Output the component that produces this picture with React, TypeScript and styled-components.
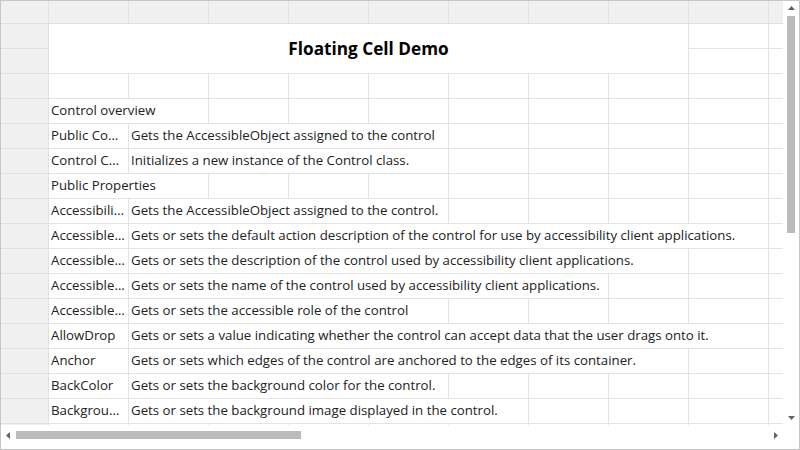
import styled, { createGlobalStyle } from 'styled-components';

const GlobalStyle = createGlobalStyle`
    html, body {
        margin: 0;
        padding: 0;
        background: #ffffff;
    }
    body {
        font-family: "Open Sans", "Liberation Sans", sans-serif;
    }
`

const COLS = 10;

type Row = {
    name?: string;
    text?: string;
    nameSpan?: number;
    textSpan?: number;
};

const rows: Row[] = [
    {},
    { name: 'Control overview', nameSpan: 2 },
    { name: 'Public Constructors', text: 'Gets the AccessibleObject assigned to the control', textSpan: 4 },
    { name: 'Control Constructor', text: 'Initializes a new instance of the Control class.', textSpan: 4 },
    { name: 'Public Properties', nameSpan: 2 },
    { name: 'AccessibilityObject', text: 'Gets the AccessibleObject assigned to the control.', textSpan: 4 },
    { name: 'AccessibleDefaultActionDescription', text: 'Gets or sets the default action description of the control for use by accessibility client applications.', textSpan: 8 },
    { name: 'AccessibleDescription', text: 'Gets or sets the description of the control used by accessibility client applications.', textSpan: 7 },
    { name: 'AccessibleName', text: 'Gets or sets the name of the control used by accessibility client applications.', textSpan: 6 },
    { name: 'AccessibleRole', text: 'Gets or sets the accessible role of the control', textSpan: 4 },
    { name: 'AllowDrop', text: 'Gets or sets a value indicating whether the control can accept data that the user drags onto it.', textSpan: 8 },
    { name: 'Anchor', text: 'Gets or sets which edges of the control are anchored to the edges of its container.', textSpan: 7 },
    { name: 'BackColor', text: 'Gets or sets the background color for the control.', textSpan: 4 },
    { name: 'BackgroundImage', text: 'Gets or sets the background image displayed in the control.', textSpan: 5 },
    {},
];

export default function App() {
    return (
        <>
            <GlobalStyle />
            <Frame>
                <Viewport>
                    <Sheet>
                        <Corner />
                        {Array.from({ length: COLS }).map((_, i) => <ColHeader key={'h' + i} />)}

                        {/* rows 1 and 2 hold the floating cell over A..H */}
                        <RowHeader />
                        <FloatingCell>Floating Cell Demo</FloatingCell>
                        <Cell />
                        <Cell />
                        <RowHeader />
                        <Cell />
                        <Cell />

                        {rows.map((r, i) => {
                            const nameSpan = r.nameSpan ?? 1;
                            const textSpan = r.text ? (r.textSpan ?? 1) : 0;
                            const used = (r.name ? nameSpan : 0) + textSpan;
                            const rest = COLS - used;
                            return [
                                <RowHeader key={'r' + i} />,
                                r.name ? <Cell key={'a' + i} $span={nameSpan} $clip={!!r.text}>{r.name}</Cell> : null,
                                r.text ? <Cell key={'b' + i} $span={textSpan}>{r.text}</Cell> : null,
                                ...Array.from({ length: rest }).map((_, j) => <Cell key={'e' + i + '-' + j} />),
                            ];
                        })}
                    </Sheet>
                </Viewport>

                <VScroll>
                    <Arrow>
                        <svg width="7" height="4" viewBox="0 0 7 4"><polygon points="0,4 7,4 3.5,0" fill="#606060" /></svg>
                    </Arrow>
                    <VTrack>
                        <VThumb />
                    </VTrack>
                    <Arrow>
                        <svg width="7" height="4" viewBox="0 0 7 4"><polygon points="0,0 7,0 3.5,4" fill="#606060" /></svg>
                    </Arrow>
                </VScroll>

                <HScroll>
                    <HArrow>
                        <svg width="4" height="7" viewBox="0 0 4 7"><polygon points="4,0 4,7 0,3.5" fill="#606060" /></svg>
                    </HArrow>
                    <HTrack>
                        <HThumb />
                    </HTrack>
                    <HArrow>
                        <svg width="4" height="7" viewBox="0 0 4 7"><polygon points="0,0 0,7 4,3.5" fill="#606060" /></svg>
                    </HArrow>
                </HScroll>
                <ScrollCorner />
            </Frame>
        </>
    )
}

const Frame = styled.div`
    width: 800px;
    height: 450px;
    box-sizing: border-box;
    border: 1px solid #c6c6c6;
    display: grid;
    grid-template-columns: 782px 16px;
    grid-template-rows: 424px 24px;
    background: #ffffff;
    overflow: hidden;
`

const Viewport = styled.div`
    overflow: hidden;
`

const Sheet = styled.div`
    display: grid;
    grid-template-columns: 48px repeat(${COLS}, 80px);
    grid-template-rows: 23px;
    grid-auto-rows: 25px;
    width: max-content;
`

const Corner = styled.div`
    box-sizing: border-box;
    background: #f0f0f0;
    border-right: 1px solid #e0e0e0;
    border-bottom: 1px solid #e0e0e0;
`

const ColHeader = styled.div`
    box-sizing: border-box;
    background: #f0f0f0;
    border-right: 1px solid #e0e0e0;
    border-bottom: 1px solid #e0e0e0;
`

const RowHeader = styled.div`
    box-sizing: border-box;
    background: #f0f0f0;
    border-right: 1px solid #e0e0e0;
    border-bottom: 1px solid #e0e0e0;
`

const Cell = styled.div<{ $span?: number; $clip?: boolean }>`
    box-sizing: border-box;
    grid-column: span ${p => p.$span ?? 1};
    border-right: 1px solid #e3e3e3;
    border-bottom: 1px solid #e3e3e3;
    padding: 0 2px;
    font-size: 13.25px;
    line-height: 23px;
    color: #222222;
    white-space: nowrap;
    overflow: ${p => (p.$clip ? 'hidden' : 'visible')};
    text-overflow: ${p => (p.$clip ? 'ellipsis' : 'clip')};
`

const FloatingCell = styled.div`
    box-sizing: border-box;
    grid-column: span 8;
    grid-row: span 2;
    border-right: 1px solid #e3e3e3;
    border-bottom: 1px solid #e3e3e3;
    display: flex;
    align-items: center;
    justify-content: center;
    padding-bottom: 1px;
    font-size: 17.2px;
    font-weight: 700;
    color: #000000;
`

const VScroll = styled.div`
    display: flex;
    flex-direction: column;
    align-items: center;
    background: #ffffff;
`

const Arrow = styled.div`
    height: 14px;
    display: flex;
    align-items: center;
    justify-content: center;
    flex-shrink: 0;
`

const VTrack = styled.div`
    flex: 1;
    width: 100%;
    display: flex;
    justify-content: center;
    padding-top: 1px;
`

const VThumb = styled.div`
    width: 8px;
    height: 217px;
    background: #bbbbbb;
`

const HScroll = styled.div`
    display: flex;
    align-items: flex-start;
    padding-top: 5px;
    box-sizing: border-box;
    background: #ffffff;
`

const HArrow = styled.div`
    width: 14px;
    height: 10px;
    display: flex;
    align-items: center;
    justify-content: center;
    flex-shrink: 0;
`

const HTrack = styled.div`
    flex: 1;
    height: 10px;
    display: flex;
    align-items: center;
    padding-left: 1px;
`

const HThumb = styled.div`
    width: 285px;
    height: 8px;
    background: #bbbbbb;
`

const ScrollCorner = styled.div`
    background: #ffffff;
`
